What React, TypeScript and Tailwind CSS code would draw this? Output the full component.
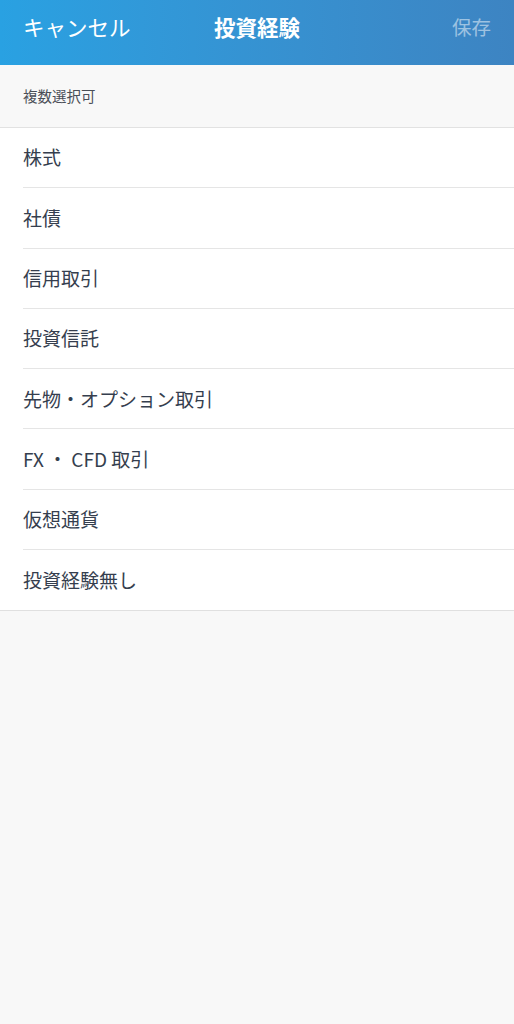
const items = [
  "株式",
  "社債",
  "信用取引",
  "投資信託",
  "先物・オプション取引",
  "FX ・ CFD 取引",
  "仮想通貨",
  "投資経験無し",
];

const App = () => {
  return (
    <div
      className="min-h-[1024px] bg-[#f8f8f8]"
      style={{ fontFamily: '"Noto Sans CJK JP", "Noto Sans", sans-serif' }}
    >
      <header className="h-[65px] grid grid-cols-3 items-center px-[23px] pb-[12px] bg-gradient-to-r from-[#29a1e2] to-[#3d84c2] text-white">
        <button className="justify-self-start text-[21.5px] leading-none">キャンセル</button>
        <h1 className="justify-self-center text-[21.5px] font-bold leading-none whitespace-nowrap">投資経験</h1>
        <button className="justify-self-end text-[19.5px] leading-none text-white/50">保存</button>
      </header>
      <div className="h-[63px] flex items-center px-[23px] text-[14.5px] text-[#4a4f57] border-b border-[#e2e2e2]">
        複数選択可
      </div>
      <ul className="bg-white border-b border-[#e0e0e0]">
        {items.map((item, i) => (
          <li key={item} className="pl-[23px]">
            <div
              className={
                "h-[60.3px] flex items-center text-[19px] text-[#353e4e] " +
                (i < items.length - 1 ? "border-b border-[#e5e5e5]" : "")
              }
            >
              {item}
            </div>
          </li>
        ))}
      </ul>
    </div>
  );
};

export default App;
